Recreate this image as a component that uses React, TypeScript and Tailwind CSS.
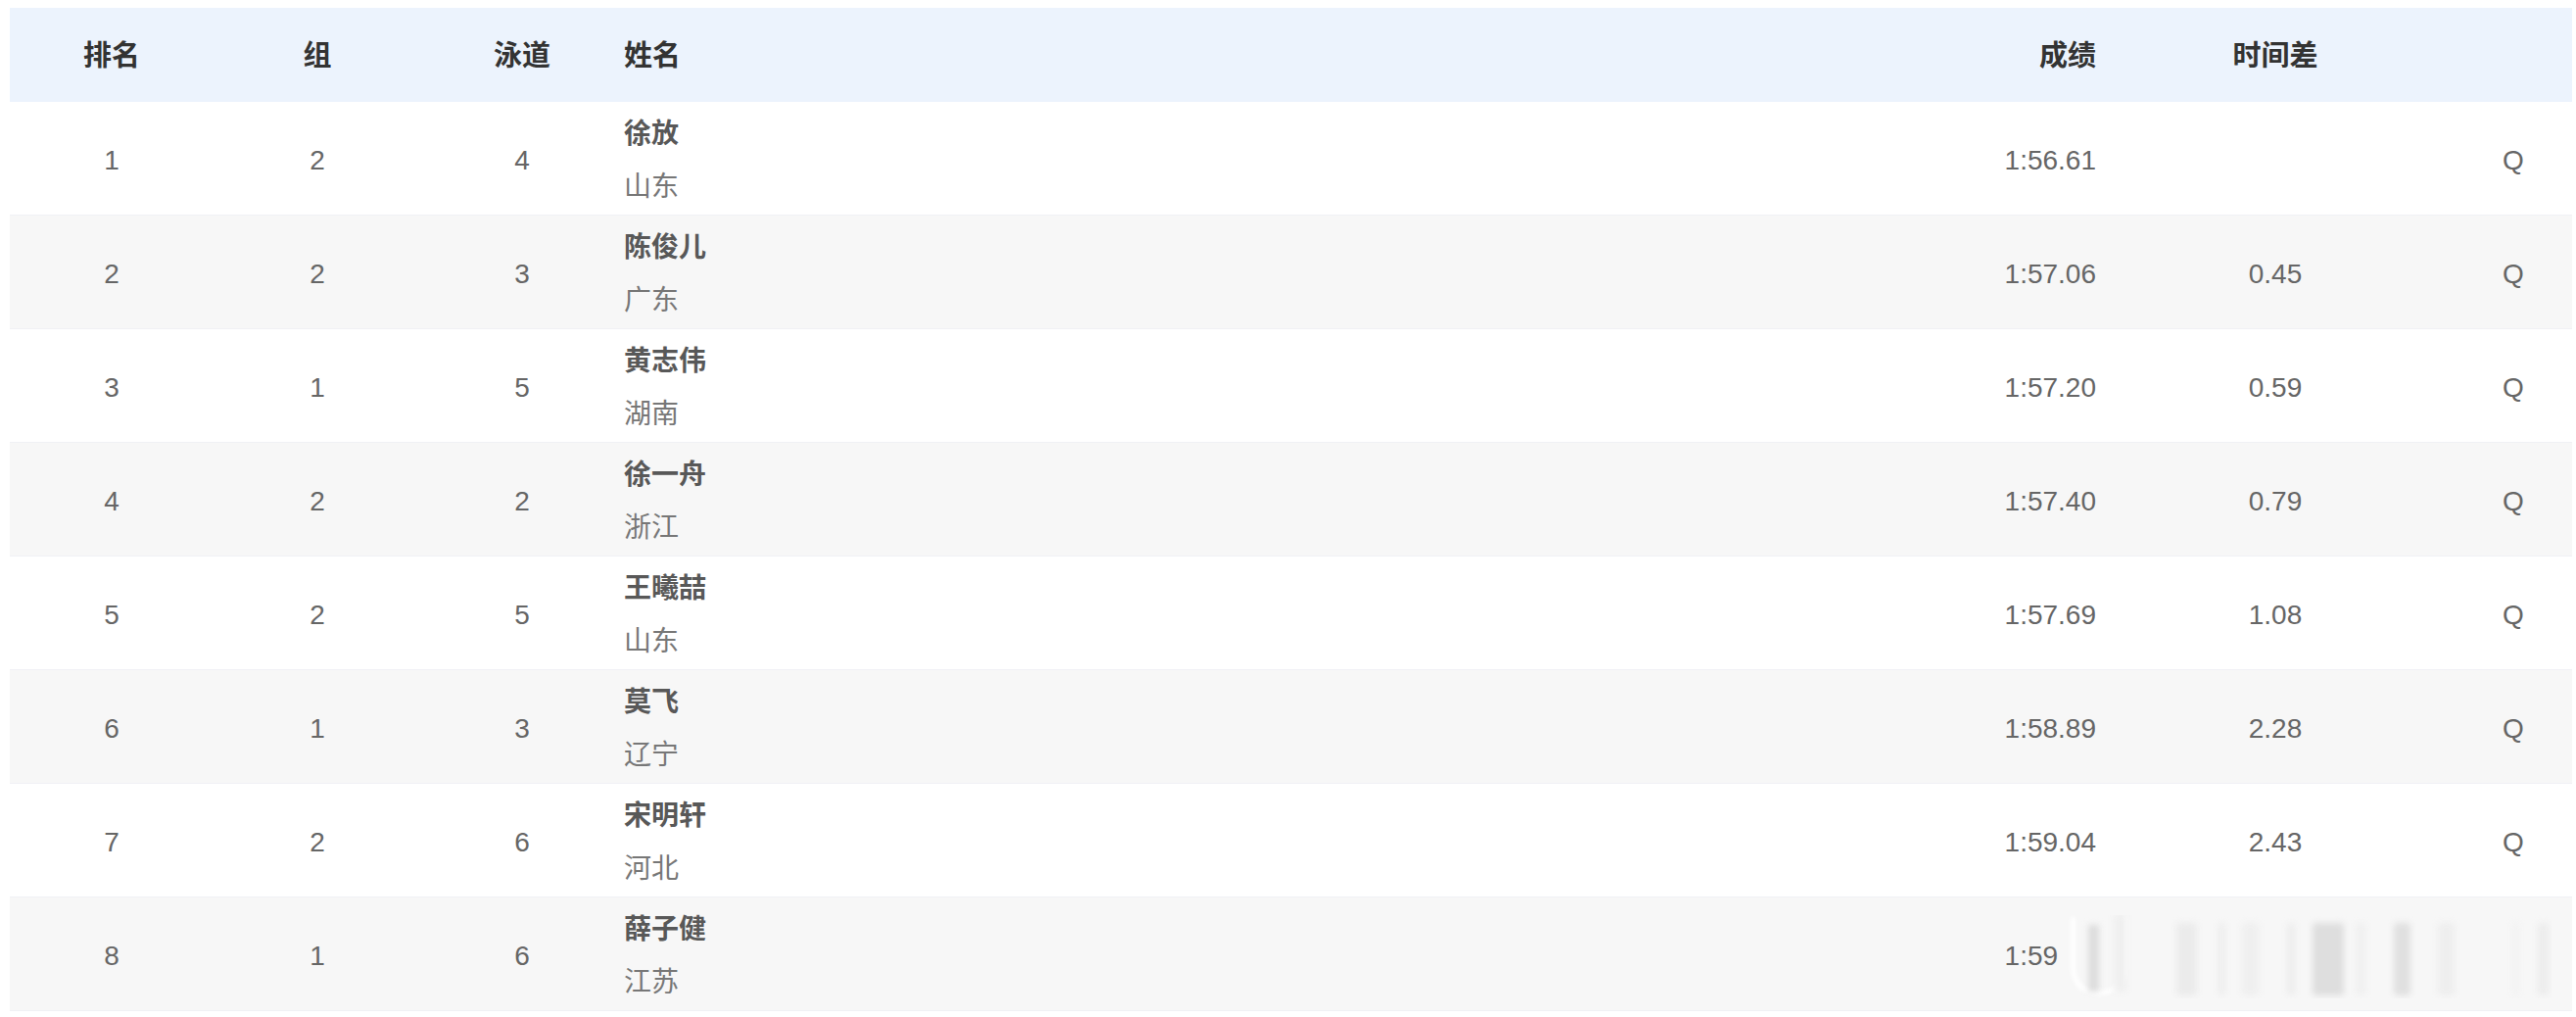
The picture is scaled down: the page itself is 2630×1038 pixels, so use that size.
const FONT = "font-['Liberation_Sans','Noto_Sans_CJK_SC',sans-serif]";

type Row = {
  rank: number;
  group: number;
  lane: number;
  name: string;
  region: string;
  time: string;
  diff: string;
  q: string;
};

const ROWS: Row[] = [
  { rank: 1, group: 2, lane: 4, name: "徐放", region: "山东", time: "1:56.61", diff: "", q: "Q" },
  { rank: 2, group: 2, lane: 3, name: "陈俊儿", region: "广东", time: "1:57.06", diff: "0.45", q: "Q" },
  { rank: 3, group: 1, lane: 5, name: "黄志伟", region: "湖南", time: "1:57.20", diff: "0.59", q: "Q" },
  { rank: 4, group: 2, lane: 2, name: "徐一舟", region: "浙江", time: "1:57.40", diff: "0.79", q: "Q" },
  { rank: 5, group: 2, lane: 5, name: "王曦喆", region: "山东", time: "1:57.69", diff: "1.08", q: "Q" },
  { rank: 6, group: 1, lane: 3, name: "莫飞", region: "辽宁", time: "1:58.89", diff: "2.28", q: "Q" },
  { rank: 7, group: 2, lane: 6, name: "宋明轩", region: "河北", time: "1:59.04", diff: "2.43", q: "Q" },
  { rank: 8, group: 1, lane: 6, name: "薛子健", region: "江苏", time: "1:59.33", diff: "", q: "" },
];

const GRID = "grid grid-cols-[208px_212px_206px_1fr_200px_366px_120px]";

// blurred bars from the watermark sitting over the last row
const BARS = [
  { left: "left-[120px]", width: "w-[21px]", tone: "bg-[#ebebeb]" },
  { left: "left-[163px]", width: "w-[7px]", tone: "bg-[#ededed]" },
  { left: "left-[187px]", width: "w-[17px]", tone: "bg-[#efefef]" },
  { left: "left-[233px]", width: "w-[8px]", tone: "bg-[#ededed]" },
  { left: "left-[259px]", width: "w-[32px]", tone: "bg-[#dedede]" },
  { left: "left-[304px]", width: "w-[9px]", tone: "bg-[#efefef]" },
  { left: "left-[342px]", width: "w-[17px]", tone: "bg-[#e0e0e0]" },
  { left: "left-[387px]", width: "w-[17px]", tone: "bg-[#eeeeee]" },
  { left: "left-[463px]", width: "w-[7px]", tone: "bg-[#f2f2f2]" },
  { left: "left-[489px]", width: "w-[11px]", tone: "bg-[#ececec]" },
];

function Watermark() {
  return (
    <div className="absolute left-[2092px] top-[18px] h-[85px] w-[503px] overflow-hidden bg-[#f7f7f7]">
      <div className="absolute left-[12px] top-[2px] h-[80px] w-[58px] rounded-b-[28px] border-x-[5px] border-b-[5px] border-white blur-[2px]" />
      <div className="absolute left-[30px] top-[10px] h-[68px] w-[11px] bg-[#dcdcdc] blur-[3px]" />
      <div className="absolute left-[56px] top-0 h-[78px] w-[13px] bg-[#efefef] blur-[3px]" />
      {BARS.map((bar, index) => (
        <div
          key={index}
          className={`absolute top-[8px] h-[74px] rounded-[3px] blur-[3px] ${bar.left} ${bar.width} ${bar.tone}`}
        />
      ))}
    </div>
  );
}

export default function App() {
  return (
    <div className={`min-h-[1038px] bg-white pl-[10px] pt-[8px] ${FONT}`}>
      <div className="w-[2616px]">
        <div className={`${GRID} h-[96px] items-center bg-[#ecf3fd] pt-[4px] text-[29px] font-bold text-[#333333]`}>
          <div className="text-center">排名</div>
          <div className="text-center">组</div>
          <div className="text-center">泳道</div>
          <div className="pl-[1px]">姓名</div>
          <div className="text-right">成绩</div>
          <div className="text-center">时间差</div>
          <div />
        </div>

        {ROWS.map((row, index) => (
          <div
            key={row.rank}
            className={`${GRID} relative h-[116px] items-center border-b border-[#f0f1f5] pt-[5px] text-[28px] text-[#666666] ${
              index % 2 === 0 ? "bg-white" : "bg-[#f7f7f7]"
            }`}
          >
            <div className="text-center">{row.rank}</div>
            <div className="text-center">{row.group}</div>
            <div className="text-center">{row.lane}</div>
            <div className="flex flex-col gap-[14px] pl-[1px]">
              <span className="leading-[40px] font-bold text-[#585858]">{row.name}</span>
              <span className="leading-[40px] text-[#777777]">{row.region}</span>
            </div>
            <div className="text-right">{row.time}</div>
            <div className="text-center">{row.diff}</div>
            <div className="text-center">{row.q}</div>
            {index === ROWS.length - 1 && <Watermark />}
          </div>
        ))}
      </div>
    </div>
  );
}
